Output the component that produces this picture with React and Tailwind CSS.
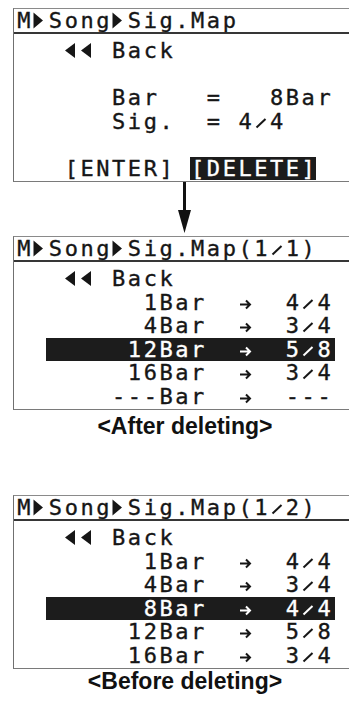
import React from 'react';

const lcdFont = "font-['DejaVu_Sans_Mono',monospace] [-webkit-text-stroke:0.35px_currentColor]";

// small drawn glyphs for the LCD characters that fonts don't match well
const Glyph = ({ ch }) => {
  if (ch === '▶') {
    return (
      <svg width="15.8" height="23.5" viewBox="0 0 15.8 23.5" className="block">
        <polygon points="1.5,3.5 11,11.5 1.5,19.5" fill="currentColor" />
      </svg>
    );
  }
  if (ch === '◀') {
    return (
      <svg width="15.8" height="23.5" viewBox="0 0 15.8 23.5" className="block">
        <polygon points="2,11.5 12,4 12,19" fill="currentColor" />
      </svg>
    );
  }
  if (ch === '→') {
    return (
      <svg width="15.8" height="23.5" viewBox="0 0 15.8 23.5" className="block">
        <path d="M3 13.5H13M9 9.5L13 13.5L9 17.5" stroke="currentColor" strokeWidth="2" fill="none" />
      </svg>
    );
  }
  if (ch === '/') {
    return (
      <svg width="15.8" height="23.5" viewBox="0 0 15.8 23.5" className="block">
        <path d="M3.5 17.5L12.5 9" stroke="currentColor" strokeWidth="2" fill="none" />
      </svg>
    );
  }
  return null;
};

const Cell = ({ ch }) => {
  const drawn = ['▶', '◀', '→', '/'].includes(ch);
  return (
    <span className="w-[15.8px] shrink-0 text-center">
      {drawn ? <Glyph ch={ch} /> : ch === ' ' ? '\u00a0' : ch}
    </span>
  );
};

const LcdRow = ({ text = '', hl, tall = false }) => {
  const chars = Array.from(text);
  const cells = (list, offset) => list.map((ch, i) => <Cell key={offset + i} ch={ch} />);

  const rowClass = `flex pl-[2px] ${tall ? 'h-[23px] leading-[23px]' : 'h-[23.5px] leading-[23.5px]'}`;

  if (!hl) {
    return <div className={rowClass}>{cells(chars, 0)}</div>;
  }

  while (chars.length < hl.to) chars.push(' ');
  return (
    <div className={rowClass}>
      {cells(chars.slice(0, hl.from), 0)}
      <span className={`flex bg-[#1c1c1c] text-white ${hl.wide ? '-ml-[1.6px] pl-[1.6px] pr-[3px]' : ''}`}>
        {cells(chars.slice(hl.from, hl.to), hl.from)}
      </span>
      {cells(chars.slice(hl.to), hl.to)}
    </div>
  );
};

const Screen = ({ title, rows, className = '' }) => (
  <div
    className={`ml-[13px] w-[336px] border-t border-l border-b border-t-[#8a8a8a] border-l-[#707070] border-b-[#7a7a7a] text-[22px] text-[#161616] ${lcdFont} ${className}`}
  >
    <LcdRow text={title} tall />
    <div className="h-[2px] bg-[#363636]" />
    <div className="pt-[5px] pb-[1px]">
      {rows.map((row, i) => (
        <LcdRow key={i} text={row.t} hl={row.hl} />
      ))}
    </div>
  </div>
);

const Caption = ({ children, className = '' }) => (
  <div
    className={`ml-[17px] w-[336px] text-center text-[23px] leading-none font-bold text-[#111] font-['Liberation_Sans',Arial,sans-serif] ${className}`}
  >
    {children}
  </div>
);

const editScreen = [
  { t: '   ◀◀ Back' },
  { t: '' },
  { t: '      Bar   =   8Bar' },
  { t: '      Sig.  = 4/4' },
  { t: '' },
  { t: '   [ENTER] [DELETE]', hl: { from: 11, to: 19 } },
];

const afterRows = [
  { t: '   ◀◀ Back' },
  { t: '        1Bar  →  4/4' },
  { t: '        4Bar  →  3/4' },
  { t: '       12Bar  →  5/8', hl: { from: 2, to: 20, wide: true } },
  { t: '       16Bar  →  3/4' },
  { t: '      ---Bar  →  ---' },
];

const beforeRows = [
  { t: '   ◀◀ Back' },
  { t: '        1Bar  →  4/4' },
  { t: '        4Bar  →  3/4' },
  { t: '        8Bar  →  4/4', hl: { from: 2, to: 20, wide: true } },
  { t: '       12Bar  →  5/8' },
  { t: '       16Bar  →  3/4' },
];

const App = () => {
  return (
    <div className="w-[350px] h-[702px] overflow-hidden bg-white pt-[8px]">
      <Screen title="M▶Song▶Sig.Map" rows={editScreen} />

      <div className="h-[54px]">
        <svg width="20" height="54" viewBox="0 0 20 54" className="ml-[175px] block">
          <rect x="8" y="0" width="3" height="31" fill="#111" />
          <polygon points="3,28 16,28 9.5,51" fill="#111" />
        </svg>
      </div>

      <Screen title="M▶Song▶Sig.Map(1/1)" rows={afterRows} />
      <Caption className="mt-[5px]">&lt;After deleting&gt;</Caption>

      <Screen title="M▶Song▶Sig.Map(1/2)" rows={beforeRows} className="mt-[57px]" />
      <Caption className="mt-[1px]">&lt;Before deleting&gt;</Caption>
    </div>
  );
};

export default App;
